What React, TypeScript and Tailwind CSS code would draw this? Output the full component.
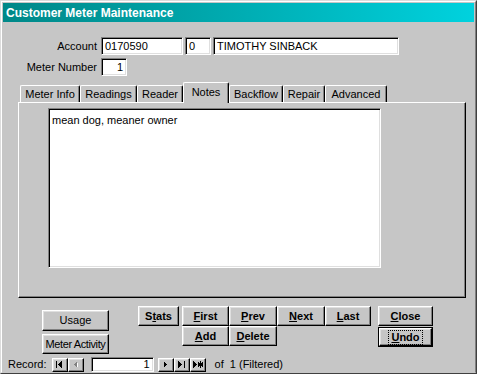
import React from 'react'

const raised =
  'bg-[#c6c6c6] border border-t-white border-l-white border-r-black border-b-black shadow-[inset_-1px_-1px_0_#808080,inset_1px_1px_0_#dfdfdf]'
const sunken =
  'bg-white border border-t-[#808080] border-l-[#808080] border-r-white border-b-white shadow-[inset_1px_1px_0_#000,inset_-1px_-1px_0_#dfdfdf]'

function Btn({ children, className = '' }: { children: React.ReactNode; className?: string }) {
  return <div className={`flex items-center justify-center leading-none whitespace-nowrap ${raised} ${className}`}>{children}</div>
}

function Field({ value, className = '', right }: { value: string; className?: string; right?: boolean }) {
  return (
    <div className={`flex items-center h-[18px] px-[3px] leading-none ${sunken} ${right ? 'justify-end' : ''} ${className}`}>
      {value}
    </div>
  )
}

function Tab({ label, className = '', active }: { label: string; className?: string; active?: boolean }) {
  if (active) {
    return (
      <div className={`relative z-10 -mb-px h-[21px] flex items-center justify-center bg-[#c6c6c6] border-l border-t border-r border-l-white border-t-white border-r-black rounded-t-[2px] shadow-[inset_-1px_0_0_#808080] ${className}`}>
        <span className="-mt-[2px]">{label}</span>
      </div>
    )
  }
  return (
    <div className={`h-[17px] flex items-center justify-center bg-[#c6c6c6] border-l border-t border-r border-l-white border-t-white border-r-black rounded-t-[2px] shadow-[inset_-1px_0_0_#808080] ${className}`}>
      <span className="mt-px">{label}</span>
    </div>
  )
}

function NavBtn({ children }: { children: React.ReactNode }) {
  return <div className={`w-[16px] h-[14px] flex items-center justify-center ${raised}`}>{children}</div>
}

export default function App() {
  return (
    <div className="w-[477px] h-[374px] overflow-hidden border border-t-[#dcdcdc] border-l-[#dcdcdc] border-r-[#404040] border-b-[#404040] bg-[#c6c6c6] font-['Liberation_Sans',Arial,sans-serif] text-[11px] text-black">
      <div className="h-full flex flex-col p-px pb-0 border border-t-white border-l-white border-r-[#808080] border-b-[#c6c6c6]">
        {/* Title bar */}
        <div className="h-[19px] flex items-center pl-[3px] bg-gradient-to-r from-[#008888] to-[#00d2de] text-white font-bold text-[12px]">
          Customer Meter Maintenance
        </div>

        {/* Header fields */}
        <div className="mt-[15px] flex items-center">
          <div className="w-[94px] text-right">Account</div>
          <Field value="0170590" className="ml-[4px] w-[82px]" />
          <Field value="0" className="ml-[2px] w-[26px]" />
          <Field value="TIMOTHY SINBACK" className="ml-[2px] w-[186px]" />
        </div>
        <div className="mt-[3px] flex items-center">
          <div className="w-[94px] text-right">Meter Number</div>
          <Field value="1" right className="ml-[4px] w-[26px]" />
        </div>

        {/* Tabs */}
        <div className="ml-[17px] mt-[6px] flex items-end">
          <Tab label="Meter Info" className="w-[60px]" />
          <Tab label="Readings" className="w-[57px]" />
          <Tab label="Reader" className="w-[46px]" />
          <Tab label="Notes" active className="w-[46px]" />
          <Tab label="Backflow" className="w-[54px]" />
          <Tab label="Repair" className="w-[42px]" />
          <Tab label="Advanced" className="w-[62px]" />
        </div>
        <div className="ml-[15px] w-[448px] h-[196px] border border-t-white border-l-white border-r-black border-b-black shadow-[inset_-1px_-1px_0_#808080]">
          <div className={`ml-[29px] mt-[5px] w-[333px] h-[160px] px-[3px] pt-[3px] ${sunken}`}>
            mean dog, meaner owner
          </div>
        </div>

        {/* Buttons */}
        <div className="mt-[8px] flex items-start">
          <div className="ml-[39px] mt-[4px] flex flex-col gap-[3px]">
            <Btn className="w-[67px] h-[21px]">Usage</Btn>
            <Btn className="w-[67px] h-[20px] tracking-[-0.4px]">Meter Activity</Btn>
          </div>
          <Btn className="ml-[29px] w-[41px] h-[20px] font-bold">
            S<u>t</u>ats
          </Btn>
          <div className="ml-[3px] grid grid-cols-[47px_48px_48px_46px]">
            <Btn className="h-[20px] font-bold">
              <u>F</u>irst
            </Btn>
            <Btn className="h-[20px] font-bold">
              <u>P</u>rev
            </Btn>
            <Btn className="h-[20px] font-bold">
              <u>N</u>ext
            </Btn>
            <Btn className="h-[20px] font-bold">
              <u>L</u>ast
            </Btn>
            <Btn className="h-[20px] font-bold">
              <u>A</u>dd
            </Btn>
            <Btn className="h-[20px] font-bold">
              <u>D</u>elete
            </Btn>
          </div>
          <div className="ml-[7px] flex flex-col gap-px">
            <Btn className="w-[55px] h-[20px] font-bold">
              <u>C</u>lose
            </Btn>
            <div className="w-[55px] h-[20px] border border-black">
              <Btn className="w-full h-full font-bold">
                <span className="px-[2px] py-px border border-dotted border-black">
                  <u>U</u>ndo
                </span>
              </Btn>
            </div>
          </div>
        </div>

        {/* Record navigation */}
        <div className="mt-auto flex items-center h-[15px]">
          <span className="ml-[5px]">Record:</span>
          <div className="ml-[5px] flex">
            <NavBtn>
              <svg width="7" height="7" shapeRendering="crispEdges">
                <rect x="0" y="0" width="1" height="7" fill="#000" />
                <polygon points="6,0 2,3.5 6,7" fill="#000" />
              </svg>
            </NavBtn>
            <NavBtn>
              <svg width="6" height="8" shapeRendering="crispEdges">
                <polygon points="5,1 2,4 5,7" fill="#fff" />
                <polygon points="4,0 1,3.5 4,7" fill="#808080" />
              </svg>
            </NavBtn>
          </div>
          <div className={`ml-[7px] w-[63px] h-[15px] flex items-center justify-end pr-[3px] leading-none ${sunken}`}>1</div>
          <div className="ml-[4px] flex">
            <NavBtn>
              <svg width="5" height="7" shapeRendering="crispEdges">
                <polygon points="1,0 4,3.5 1,7" fill="#000" />
              </svg>
            </NavBtn>
            <NavBtn>
              <svg width="7" height="7" shapeRendering="crispEdges">
                <polygon points="0,0 4,3.5 0,7" fill="#000" />
                <rect x="6" y="0" width="1" height="7" fill="#000" />
              </svg>
            </NavBtn>
            <NavBtn>
              <svg width="10" height="7" shapeRendering="crispEdges">
                <polygon points="0,0 4,3.5 0,7" fill="#000" />
                <path d="M7.5 0v7M5 1.5l5 4M10 1.5l-5 4M5 3.5h5" stroke="#000" strokeWidth="1" />
              </svg>
            </NavBtn>
          </div>
          <span className="ml-[9px]">of&nbsp; 1 (Filtered)</span>
        </div>
      </div>
    </div>
  )
}
